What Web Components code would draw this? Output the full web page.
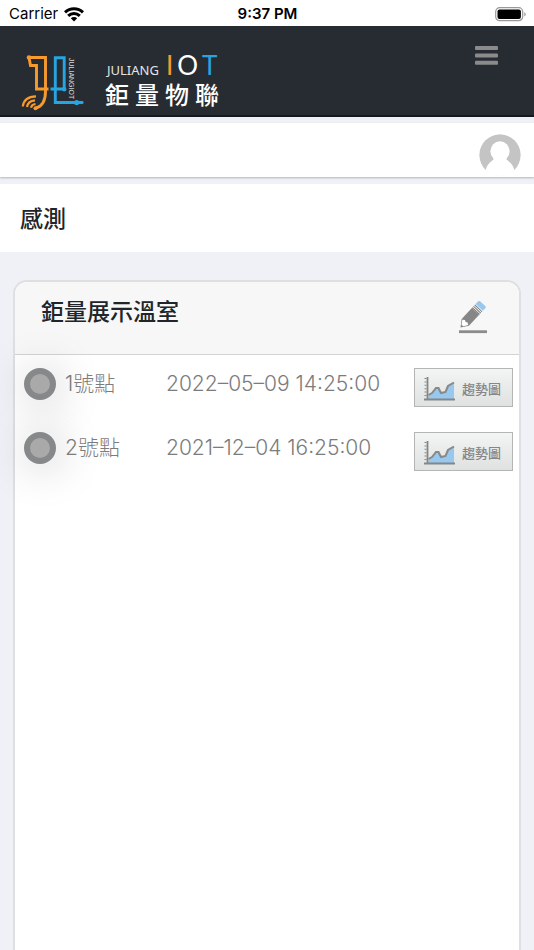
<!DOCTYPE html>
<html lang="zh-Hant">
<head>
<meta charset="utf-8">
<meta name="viewport" content="width=device-width, initial-scale=1">
<title>鉅量物聯</title>
<style>
  * { box-sizing: border-box; }
  html, body { height: 100%; }
  body {
    margin: 0;
    background: #f0f1f7;
    color: #212529;
    font-family: Inter, "Noto Sans CJK TC", sans-serif;
    overflow: hidden;
  }
</style>
</head>
<body>
<iot-app>
  <status-bar carrier="Carrier" time="9:37 PM"></status-bar>
  <site-header></site-header>
  <user-bar></user-bar>
  <page-title>感測</page-title>
  <sensor-card heading="鉅量展示溫室">
    <sensor-row name="1號點" time="2022–05–09 14:25:00"></sensor-row>
    <sensor-row name="2號點" time="2021–12–04 16:25:00"></sensor-row>
  </sensor-card>
</iot-app>

<script>
class IotApp extends HTMLElement {
  constructor() {
    super();
    this.attachShadow({ mode: 'open' }).innerHTML = `
      <style>
        :host { display: flex; flex-direction: column; min-height: 100%; }
      </style>
      <slot></slot>
    `;
  }
}

class StatusBar extends HTMLElement {
  connectedCallback() {
    this.attachShadow({ mode: 'open' }).innerHTML = `
      <style>
        :host {
          display: grid;
          grid-template-columns: 1fr auto 1fr;
          align-items: center;
          height: 26px;
          padding: 2px 8px 0 9px;
          box-sizing: border-box;
          background: #fff;
          color: #000;
          font-size: 15px;
          line-height: 20px;
        }
        .left { display: flex; align-items: center; gap: 6px; }
        .time { font-weight: 600; }
        .battery { justify-self: end; }
        svg { display: block; }
      </style>
      <div class="left">
        <span>${this.getAttribute('carrier')}</span>
        <svg width="20" height="15" viewBox="0 0 20 15" fill="none" stroke="#000" stroke-width="3">
          <path d="M1 5.3a13 13 0 0 1 18 0M4.2 8.8a8.4 8.4 0 0 1 11.6 0"/>
          <path d="M10 14.5 6.8 11.3a4.6 4.6 0 0 1 6.4 0z" fill="#000" stroke="none"/>
        </svg>
      </div>
      <span class="time">${this.getAttribute('time')}</span>
      <svg class="battery" width="31" height="15" viewBox="0 0 31 15">
        <rect x=".7" y=".7" width="27" height="13" rx="4" fill="none" stroke="#999" stroke-width="1.2"/>
        <rect x="2.5" y="2.5" width="23.4" height="9.4" rx="2" fill="#000"/>
        <path d="M29.3 5v4.6q3-2.3 0-4.6z" fill="#999"/>
      </svg>
    `;
  }
}

class SiteHeader extends HTMLElement {
  connectedCallback() {
    this.attachShadow({ mode: 'open' }).innerHTML = `
      <style>
        :host {
          display: flex;
          justify-content: space-between;
          align-items: flex-start;
          height: 91px;
          padding: 19px 36px 0 20px;
          box-sizing: border-box;
          background: #272c33;
          border-bottom: 2px solid #16191d;
        }
        .logo { display: flex; gap: 21px; color: #fff; text-decoration: none; padding-top: 8px; }
        svg { display: block; }
        .words { display: flex; flex-direction: column; }
        .latin {
          display: flex;
          align-items: baseline;
          gap: 7px;
          height: 25px;
          padding-left: 2px;
          font: 13px/24px "Noto Sans", sans-serif;
          color: #e4e5e6;
        }
        .iot { display: flex; gap: 4px; font-family: Lato, sans-serif; font-size: 26px; color: #fff; }
        .i { color: #f79a2e; }
        .t { color: #27a5e0; }
        .han {
          display: flex;
          gap: 6px;
          font: 500 24px/32px "Noto Sans CJK TC", sans-serif;
        }
        button { border: 0; padding: 0; background: none; }
      </style>
      <a class="logo" href="#" aria-label="JULIANG IOT 鉅量物聯">
        <svg width="64" height="59" viewBox="20 53 64 59" fill="none" stroke-width="2.9">
          <g stroke="#f79a2e">
            <path d="M29 57.5H45.5V91C45.5 100 43.5 106 36 108"/>
            <path d="M29 57.5L30.5 65.5H36.5V89H48.5"/>
            <path d="M22.8 106.5C23.5 100 28 96.5 36 96.3M27 107C27.5 103 30 100.8 35 100.3M31 107.7C31.5 105.5 32.5 104.3 35.5 104" stroke-width="2.2"/>
          </g>
          <g fill="#f79a2e">
            <circle cx="29" cy="57.5" r="2.3"/>
            <circle cx="35.5" cy="108.3" r="2"/>
          </g>
          <path d="M64.2 89V57.8H55.3V102.5H82M50.5 89H64" stroke="#27a5e0"/>
          <g fill="#27a5e0">
            <circle cx="64.2" cy="89.3" r="2.2"/>
            <circle cx="76.7" cy="102.5" r="2.6"/>
            <circle cx="81.8" cy="102.5" r="1.8"/>
          </g>
          <text transform="translate(69 58) rotate(90)" font-family="Liberation Sans" font-size="7" fill="#ddd" stroke="none">JULIANGIOT</text>
        </svg>
        <span class="words">
          <span class="latin">
            <span>JULIANG</span>
            <span class="iot"><span class="i">I</span><span>O</span><span class="t">T</span></span>
          </span>
          <span class="han"><span>鉅</span><span>量</span><span>物</span><span>聯</span></span>
        </span>
      </a>
      <button type="button" aria-label="選單">
        <svg width="23" height="20" viewBox="0 0 23 20" fill="#8b8b8b">
          <rect y="1" width="23" height="4" rx="1"/>
          <rect y="8.4" width="23" height="4" rx="1"/>
          <rect y="15.8" width="23" height="4" rx="1"/>
        </svg>
      </button>
    `;
  }
}

class UserBar extends HTMLElement {
  connectedCallback() {
    this.attachShadow({ mode: 'open' }).innerHTML = `
      <style>
        :host {
          display: flex;
          justify-content: flex-end;
          margin: 6px 0 7px;
          padding: 11px 13px 1px 0;
          background: #fff;
          box-shadow: 0 1px 2px rgba(0, 0, 0, .25);
        }
        button { border: 0; padding: 0; background: none; }
        svg { display: block; border-radius: 50%; }
      </style>
      <button type="button" aria-label="使用者">
        <svg width="42" height="42" viewBox="0 0 42 42">
          <circle cx="21" cy="21" r="20.7" fill="#c4c4c4"/>
          <ellipse cx="21" cy="17.3" rx="9.6" ry="10" fill="#fff"/>
          <path d="M15 24.5C14 27 8.5 28 6.5 36.5L5 42H37L35.5 36.5C33.5 28 28 27 27 24.5z" fill="#fff"/>
        </svg>
      </button>
    `;
  }
}

class PageTitle extends HTMLElement {
  connectedCallback() {
    this.attachShadow({ mode: 'open' }).innerHTML = `
      <style>
        :host { display: block; padding: 16px 20px 18px; background: #fff; }
        h1 { margin: 0; font: 500 23px/34px "Noto Sans CJK TC", sans-serif; }
      </style>
      <h1><slot></slot></h1>
    `;
  }
}

class SensorCard extends HTMLElement {
  connectedCallback() {
    this.attachShadow({ mode: 'open' }).innerHTML = `
      <style>
        :host {
          display: flex;
          flex-direction: column;
          flex: 1;
          margin: 28px 13px 0;
          border: 2px solid #dfdfe1;
          border-bottom: 0;
          border-radius: 14px 14px 0 0;
          background: #fff;
        }
        header {
          display: flex;
          justify-content: space-between;
          align-items: flex-start;
          height: 73px;
          box-sizing: border-box;
          padding: 11px 31px 0 26px;
          background: #f7f7f7;
          border-bottom: 1px solid #d3d3d3;
          border-radius: 12px 12px 0 0;
        }
        h2 { margin: 0; font: 500 23px/34px "Noto Sans CJK TC", sans-serif; }
        button { border: 0; padding: 8px 0 0; background: none; }
        svg { display: block; }
        .rows { padding: 1px 0; }
      </style>
      <header>
        <h2>${this.getAttribute('heading')}</h2>
        <button type="button" aria-label="編輯">
          <svg width="30" height="34" viewBox="0 0 30 34">
            <rect x="1" y="29.3" width="28" height="2.8" fill="#8b8b8b"/>
            <g transform="translate(2.5 26.5) rotate(-47)">
              <path d="M0 0L7 -5H22V5H7z" fill="#868686"/>
              <path d="M2.8 -1.2L7 -4L8.5 -1.8L7.5 0L8.5 1.8L7 4L2.8 1.2z" fill="#fff"/>
              <path d="M22.6 -5V5M24.4 -5V5M26.2 -5V5" stroke="#777" stroke-width="1"/>
              <path d="M27.4 -5H31Q32.5 -5 32.5 -3.5V3.5Q32.5 5 31 5H27.4z" fill="#98c8ee"/>
            </g>
          </svg>
        </button>
      </header>
      <div class="rows" role="list"><slot></slot></div>
    `;
  }
}

class SensorRow extends HTMLElement {
  connectedCallback() {
    this.setAttribute('role', 'listitem');
    this.attachShadow({ mode: 'open' }).innerHTML = `
      <style>
        :host {
          display: grid;
          grid-template-columns: 32px 92px 1fr auto;
          column-gap: 9px;
          align-items: start;
          padding: 12px 6px 13px 9px;
          color: #7c7c7c;
          font-size: 21px;
          font-weight: 300;
          line-height: 32px;
        }
        .dot {
          width: 32px;
          height: 32px;
          box-sizing: border-box;
          border: 6px solid #868889;
          border-radius: 50%;
          background: #a9a9a9;
          box-shadow: 3px 3px 44px rgba(0, 0, 0, .26);
        }
        span { white-space: nowrap; }
        button {
          display: flex;
          align-items: center;
          gap: 7px;
          height: 39px;
          padding: 3px 11px 0 9px;
          border: 1px solid #b5b5b5;
          background: linear-gradient(#f3f4f4, #dfe2e1);
          color: #868686;
          font: 500 13px/20px "Noto Sans CJK TC", sans-serif;
        }
      </style>
      <i class="dot"></i>
      <span>${this.getAttribute('name')}</span>
      <span>${this.getAttribute('time')}</span>
      <button type="button">
        <svg width="31" height="26" viewBox="0 0 31 26" fill="none">
          <path d="M4.5 23V19L8 17L12 12L15 12L17 17L21 16L24 10L30 6V23z" fill="#98c8ee"/>
          <path d="M4.5 19L8 17L12 12L14.5 12L17 17L21.5 16L24 10L30 6.5" stroke="#888" stroke-width="2"/>
          <path d="M3.5 1V23.5M0 23.5H31" stroke="#868686" stroke-width="1.8"/>
          <path d="M1.5 2V22" stroke="#868686" stroke-width="2" stroke-dasharray="1 2.4"/>
        </svg>
        趨勢圖
      </button>
    `;
  }
}

customElements.define('iot-app', IotApp);
customElements.define('status-bar', StatusBar);
customElements.define('site-header', SiteHeader);
customElements.define('user-bar', UserBar);
customElements.define('page-title', PageTitle);
customElements.define('sensor-card', SensorCard);
customElements.define('sensor-row', SensorRow);
</script>
</body>
</html>
